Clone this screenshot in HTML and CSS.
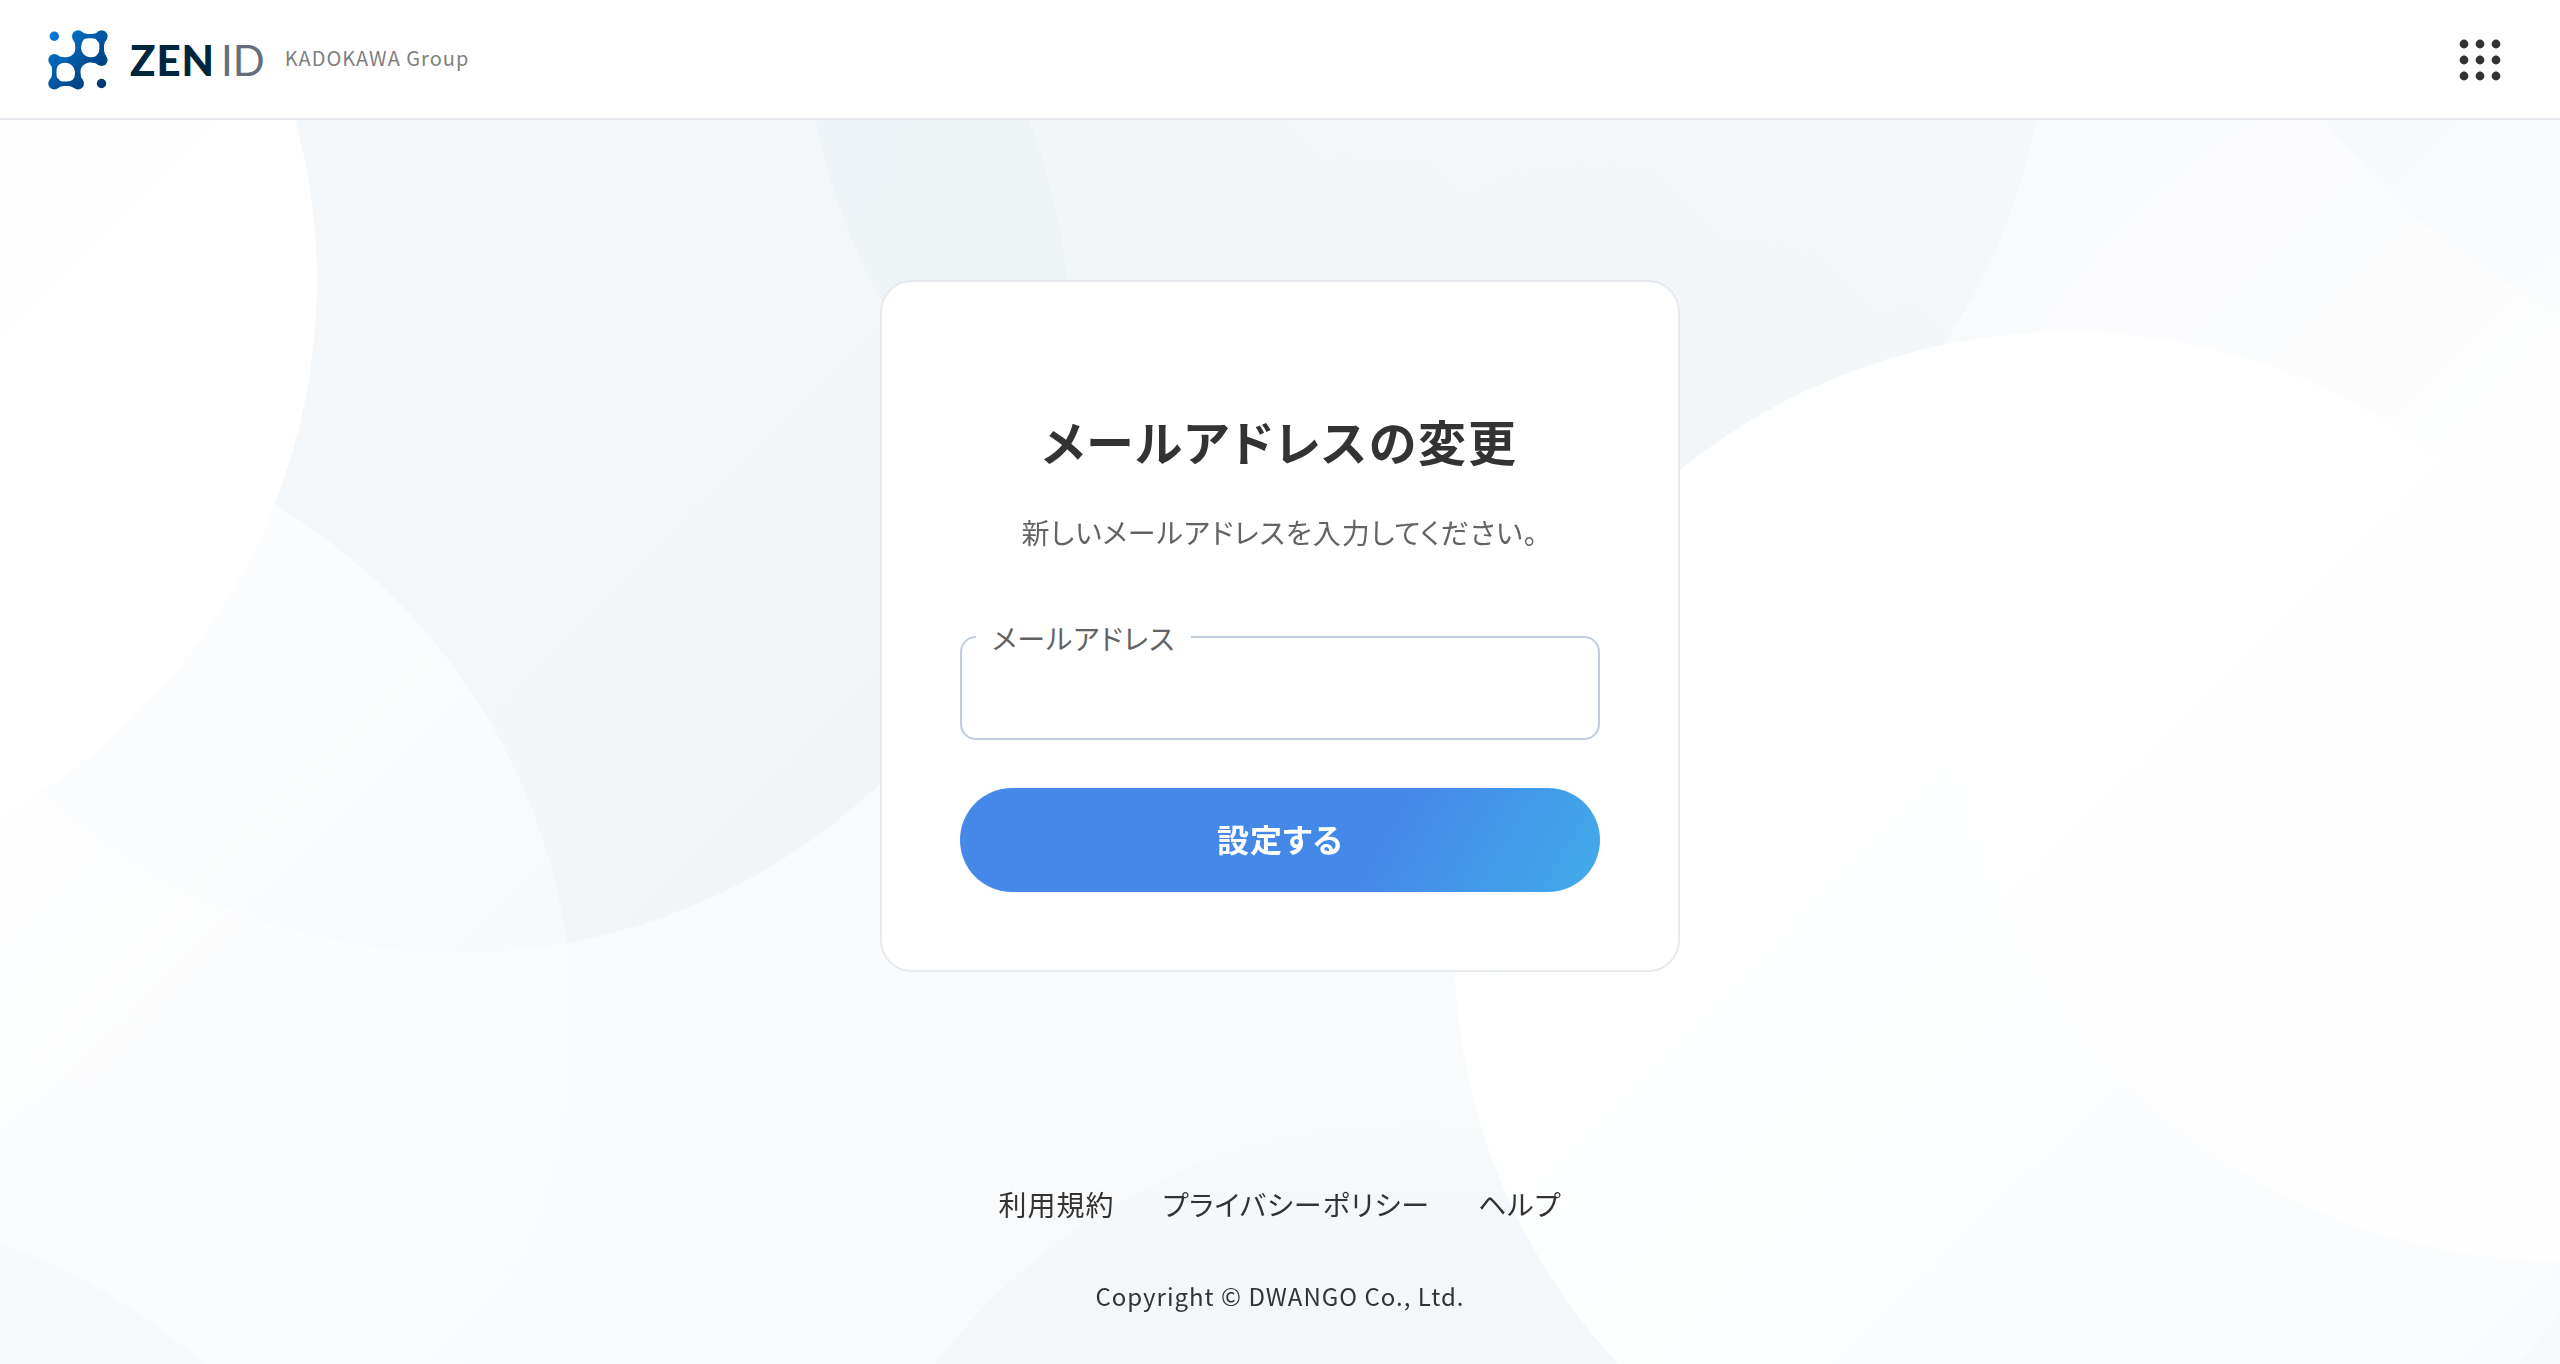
FILE: index.html
```html
<!DOCTYPE html>
<html lang="ja">
<head>
<meta charset="utf-8">
<meta name="viewport" content="width=device-width, initial-scale=1">
<title>メールアドレスの変更 | ZEN ID</title>
<link rel="stylesheet" href="styles.css">
</head>
<body>
<svg class="backdrop" viewBox="0 0 2560 1364" preserveAspectRatio="xMidYMid slice" aria-hidden="true">
  <defs>
    <linearGradient id="base" x1="0" y1="0" x2="1" y2="1">
      <stop offset="0" stop-color="#fdfefe"/><stop offset=".45" stop-color="#f9fafc"/><stop offset="1" stop-color="#f6f9fb"/>
    </linearGradient>
    <linearGradient id="mist" x1="0" y1="0" x2="1" y2="1">
      <stop offset=".2" stop-color="#f8f9fa"/><stop offset=".4" stop-color="#f3f7fa"/><stop offset=".65" stop-color="#f3f7f8"/><stop offset="1" stop-color="#eff3f7"/>
    </linearGradient>
    <linearGradient id="mistTop" x1="0" y1="1" x2="1" y2="0">
      <stop offset=".2" stop-color="#e7eff4" stop-opacity=".45"/><stop offset="1" stop-color="#edf2f4" stop-opacity=".2"/>
    </linearGradient>
    <linearGradient id="mistBottom" x1="0" y1="0" x2="0" y2="1">
      <stop offset="0" stop-color="#f7f9fb"/><stop offset=".15" stop-color="#f3f7f9"/>
    </linearGradient>
    <linearGradient id="whiteLeft" x1="0" y1="0" x2="1" y2="1">
      <stop offset=".3" stop-color="#f9fbfd"/><stop offset=".65" stop-color="#fefefe"/><stop offset="1" stop-color="#ffffff"/>
    </linearGradient>
    <linearGradient id="veil" x1="0" y1="0" x2="1" y2="1">
      <stop offset=".1" stop-color="#ffffff" stop-opacity=".9"/><stop offset=".6" stop-color="#fcfdfe" stop-opacity=".6"/><stop offset="1" stop-color="#fafbfd" stop-opacity=".2"/>
    </linearGradient>
    <linearGradient id="whiteRight" x1="0" y1="0" x2="1" y2="1">
      <stop offset="0" stop-color="#ffffff"/><stop offset=".45" stop-color="#fdfefe"/><stop offset=".6" stop-color="#fbfcfe"/><stop offset="1" stop-color="#f7fafb"/>
    </linearGradient>
    <linearGradient id="glow" x1="0" y1="0" x2="1" y2="1">
      <stop offset="0" stop-color="#fefefe" stop-opacity="0"/><stop offset=".4" stop-color="#fefefe" stop-opacity=".7"/><stop offset=".8" stop-color="#fefefe"/>
    </linearGradient>
  </defs>
  <rect width="2560" height="1364" fill="url(#base)"/>
  <circle cx="457" cy="340" r="613" fill="url(#mist)"/>
  <circle cx="1426" cy="0" r="622" fill="url(#mistTop)"/>
  <circle cx="2817" cy="-243" r="611" fill="#f2f6fa"/>
  <circle cx="-34" cy="1028" r="607" fill="url(#veil)"/>
  <circle cx="-294" cy="281" r="611" fill="url(#whiteLeft)"/>
  <circle cx="-204" cy="1819" r="611" fill="#f5f9fb"/>
  <circle cx="1423" cy="1732" r="611" fill="url(#mistBottom)"/>
  <circle cx="2068" cy="946" r="614" fill="url(#whiteRight)"/>
  <circle cx="2560" cy="650" r="611" fill="url(#glow)"/>
</svg>

<header class="header">
  <a class="brand" href="#" aria-label="ZEN ID KADOKAWA Group">
    <svg class="brand-mark" viewBox="0 0 60 60" aria-hidden="true">
      <defs>
        <linearGradient id="mark" gradientUnits="userSpaceOnUse" x1="2" y1="2" x2="58" y2="58">
          <stop offset="0" stop-color="#007bdc"/><stop offset="1" stop-color="#003264"/>
        </linearGradient>
      </defs>
      <g fill="url(#mark)">
        <circle cx="6.300" cy="6.300" r="4.700"/>
        <circle cx="53.500" cy="53.500" r="4.700"/>
        <circle cx="30" cy="6.200" r="6"/>
        <circle cx="53.600" cy="6.200" r="6"/>
        <circle cx="53.600" cy="30" r="6"/>
        <circle cx="6.300" cy="30" r="6"/>
        <circle cx="6.300" cy="53.600" r="6"/>
        <circle cx="30" cy="53.600" r="6"/>
        <path fill-rule="evenodd" d="M25 9.500Q27.300 12 27.300 18C27.300 25 22 27.300 17 27.300Q12 27.500 10 25.500L6 30L2 34Q4 36 4 40V44Q4 47 2 49.500L6 53.600L10 58Q13 56 16 56H20Q23 56 26 58L30 53.600L34.500 50Q32.500 47 32.500 42C32.500 35 38 32.500 43 32.500Q47 32.500 50 34.500L53.600 30L58 26Q56 23 56 20V16Q56 13 58 10L53.600 6L50 2Q47 4 44 4H40Q37 4 34 2L30 6ZM41 8.300Q36 8.300 35.500 10Q33 13 33 17C33 23 37 27.200 43 27.200Q46 27.200 48 26Q51.300 23 51.300 20V14Q51 12 49 10.500Q48 8.300 44 8.300ZM17 32.700C23 32.700 27 37 27 43Q27 47 25 49.500Q23 51.500 19 51.500H15Q11 51.300 10.500 49Q8.500 48 8.500 45V40Q8.500 37 10.500 35Q13 32.700 17 32.700Z"/>
      </g>
    </svg>
    <span class="brand-name"><span class="brand-zen">ZEN</span><span class="brand-id">ID</span></span>
    <span class="brand-group">KADOKAWA Group</span>
  </a>
  <button class="apps" type="button" aria-label="サービス一覧">
    <svg viewBox="0 0 48 48" aria-hidden="true" fill="#333">
      <circle cx="8" cy="8" r="4.400"/><circle cx="24" cy="8" r="4.400"/><circle cx="40" cy="8" r="4.400"/>
      <circle cx="8" cy="24" r="4.400"/><circle cx="24" cy="24" r="4.400"/><circle cx="40" cy="24" r="4.400"/>
      <circle cx="8" cy="40" r="4.400"/><circle cx="24" cy="40" r="4.400"/><circle cx="40" cy="40" r="4.400"/>
    </svg>
  </button>
</header>

<main class="main">
  <form class="card">
    <h1 class="title">メールアドレスの変更</h1>
    <p class="lead">新しいメールアドレスを入力してください。</p>
    <div class="field">
      <label class="field-label" for="email">メールアドレス</label>
      <input class="field-input" id="email" type="email" name="email">
    </div>
    <button class="submit" type="submit">設定する</button>
  </form>
</main>

<footer class="footer">
  <nav class="links">
    <a href="#">利用規約</a>
    <a href="#">プライバシーポリシー</a>
    <a href="#">ヘルプ</a>
  </nav>
  <p class="copyright">Copyright © DWANGO Co., Ltd.</p>
</footer>
</body>
</html>
```
FILE: styles.css
```css
* {
  box-sizing: border-box;
}

body {
  display: flex;
  flex-direction: column;
  min-height: 100vh;
  margin: 0;
  color: #333;
  background: #f9fafc;
  font-family: "Noto Sans CJK JP", sans-serif;
  font-size: 28px;
  font-feature-settings: "palt";
  letter-spacing: 1px;
}

h1,
p {
  margin: 0;
}

a {
  color: inherit;
  text-decoration: none;
}

.backdrop {
  position: fixed;
  inset: 0;
  z-index: -1;
  width: 100%;
  height: 100%;
}

.header {
  display: flex;
  align-items: center;
  justify-content: space-between;
  height: 120px;
  padding: 2px 48px 0;
  background: #fff;
  border-bottom: 2px solid #e6eaee;
}

.brand {
  display: flex;
  align-items: center;
}

.brand-mark {
  width: 60px;
  height: 60px;
}

.brand-name {
  display: flex;
  gap: 6px;
  margin-left: 22px;
  font-family: Lato, sans-serif;
  font-size: 42px;
  line-height: 60px;
  letter-spacing: 0;
}

.brand-zen {
  color: #00263d;
  font-weight: 900;
  letter-spacing: 1px;
}

.brand-id {
  color: #656f7b;
  font-weight: 400;
}

.brand-group {
  margin-left: 20px;
  padding-bottom: 4px;
  color: #808080;
  font-size: 20px;
  line-height: 32px;
}

.apps {
  width: 64px;
  height: 64px;
  padding: 8px;
  border: 0;
  background: none;
}

.apps svg {
  display: block;
}

.main {
  display: flex;
  justify-content: center;
  padding: 160px 24px 0;
}

.card {
  display: flex;
  flex-direction: column;
  width: 100%;
  max-width: 800px;
  padding: 122px 78px 78px;
  background: #fff;
  border: 2px solid #e6eaef;
  border-radius: 32px;
}

.title {
  font-size: 48px;
  line-height: 72px;
  letter-spacing: 2px;
  text-align: center;
}

.lead {
  margin-top: 36px;
  color: #636363;
  line-height: 40px;
  text-align: center;
}

.field {
  position: relative;
  margin-top: 84px;
}

.field-label {
  position: absolute;
  top: -18px;
  left: 16px;
  padding: 0 16px;
  color: #636363;
  background: #fff;
  line-height: 40px;
}

.field-input {
  display: block;
  width: 100%;
  height: 104px;
  padding: 0 32px;
  color: inherit;
  background: #fff;
  border: 2px solid #c1ccda;
  border-radius: 16px;
  font: inherit;
}

.submit {
  height: 104px;
  margin-top: 48px;
  padding: 0 0 4px;
  color: #fff;
  background: linear-gradient(120deg, #4489e8 0%, #4489e8 65%, #42abea 100%);
  border: 0;
  border-radius: 52px;
  font: inherit;
  font-size: 32px;
  font-weight: 700;
  letter-spacing: 1px;
}

.footer {
  display: flex;
  flex-direction: column;
  align-items: center;
  gap: 54px;
  margin-top: auto;
  padding: 48px 24px 50px;
}

.links {
  display: flex;
  gap: 48px;
  line-height: 40px;
}

.copyright {
  font-size: 24px;
  line-height: 36px;
}
```
